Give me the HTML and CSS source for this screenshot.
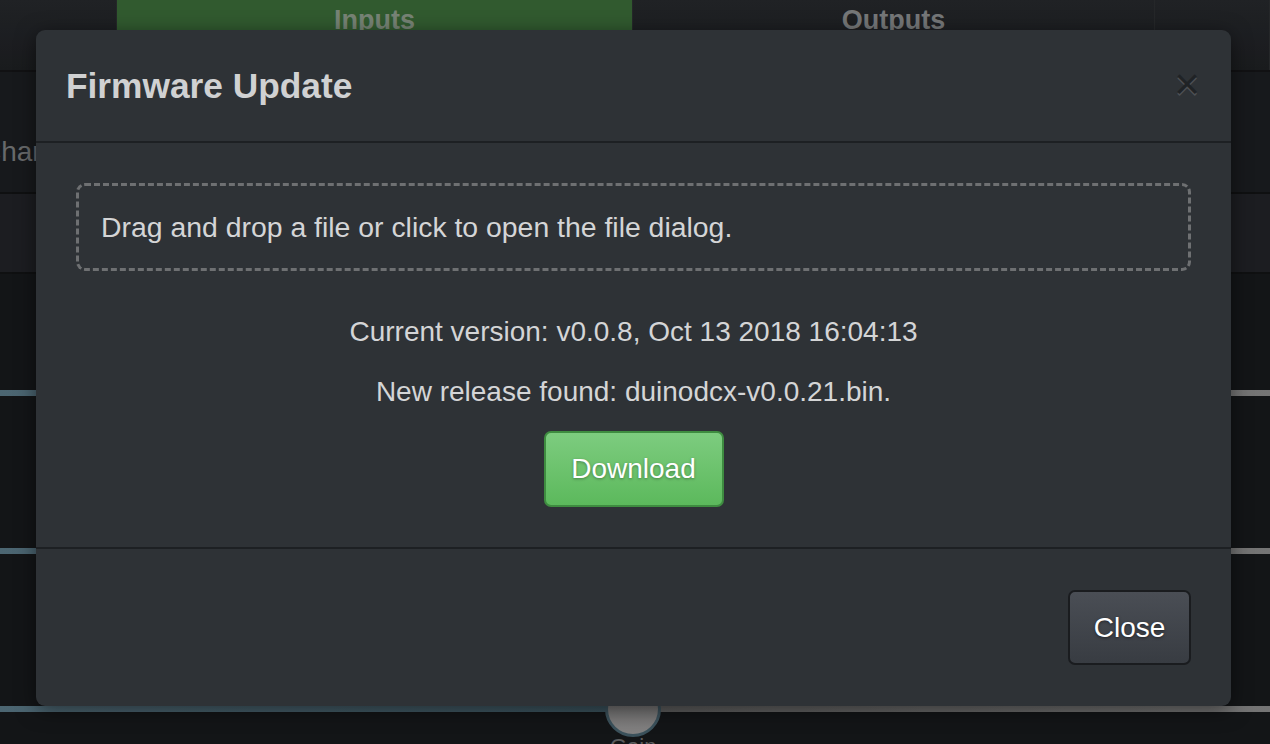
FILE: index.html
```html
<!DOCTYPE html>
<html>
<head>
<meta charset="utf-8">
<title>Firmware Update</title>
<link rel="stylesheet" href="styles.css">
</head>
<body>
<div class="page">
  <div class="tabs">
    <div class="tab-cell"></div>
    <div class="tab tab-active">Inputs</div>
    <div class="tab">Outputs</div>
    <div class="tab-cell"></div>
  </div>
  <div class="row row-name"><span class="row-label">Channel</span></div>
  <div class="row row-band"></div>
  <div class="row row-fader f1"><div class="track"></div></div>
  <div class="row row-fader f2"><div class="track"></div></div>
  <div class="row row-fader f3"><div class="track"></div><div class="knob"></div><span class="gain">Gain</span></div>
</div>

<div class="backdrop"></div>

<div class="modal">
  <div class="modal-header">
    <h4 class="modal-title">Firmware Update</h4>
    <button class="close" type="button">&times;</button>
  </div>
  <div class="modal-body">
    <div class="dropzone">Drag and drop a file or click to open the file dialog.</div>
    <p class="info first">Current version: v0.0.8, Oct 13 2018 16:04:13</p>
    <p class="info">New release found: duinodcx-v0.0.21.bin.</p>
    <div class="center"><button class="btn btn-success" type="button">Download</button></div>
  </div>
  <div class="modal-footer">
    <button class="btn btn-default" type="button">Close</button>
  </div>
</div>
</body>
</html>
```

FILE: styles.css
```css
html, body {
  margin: 0;
  padding: 0;
  width: 1270px;
  height: 744px;
  overflow: hidden;
  background: #17191c;
  font-family: "Liberation Sans", Arial, Helvetica, sans-serif;
}

.page {
  display: flex;
  flex-direction: column;
  width: 1270px;
  height: 744px;
}

.tabs {
  display: grid;
  grid-template-columns: 117px 516px 522px 1fr;
  height: 70px;
  flex: none;
  border-bottom: 2px solid #141517;
  background: linear-gradient(#26282c, #1e2023);
}

.tab-cell {
  border-right: 1px solid #2c2e31;
}

.tab {
  color: #8a8c8e;
  font-size: 27px;
  font-weight: bold;
  text-align: center;
  line-height: 40px;
  border-right: 1px solid #2c2e31;
}

.tab-active {
  background: #3a6a38;
  color: #8c9a8a;
}

.row {
  position: relative;
  flex: none;
}

.row-name {
  height: 120px;
  background: #1c1e21;
  border-bottom: 2px solid #121315;
}

.row-label {
  position: absolute;
  left: -19px;
  top: 64px;
  color: #7a7c7e;
  font-size: 28px;
}

.row-band {
  height: 78px;
  background: #212327;
  border-bottom: 2px solid #121315;
}

.row-fader {
  background: #17191c;
}

.f1 { height: 122px; }
.f2 { height: 158px; }
.f3 { flex: 1; }

.track {
  position: absolute;
  left: 0;
  right: 0;
  bottom: 0;
  height: 6px;
  background: linear-gradient(90deg, #5a7886 0%, #44606c 48%, #6c6c6c 52%, #8a8a8a 100%);
}

.f3 .track {
  bottom: auto;
  top: 152px;
}

.knob {
  position: absolute;
  left: 605px;
  top: 127px;
  width: 50px;
  height: 50px;
  border-radius: 50%;
  border: 3px solid #46606c;
  background: linear-gradient(#7a7a7a, #9a9898);
}

.gain {
  position: absolute;
  left: 610px;
  top: 180px;
  color: #6a6c6e;
  font-size: 22px;
}

.backdrop {
  position: absolute;
  inset: 0;
  background: rgba(0, 0, 0, 0.15);
}

.modal {
  position: absolute;
  left: 36px;
  top: 30px;
  width: 1195px;
  height: 676px;
  background: #2e3236;
  border-radius: 9px;
  box-shadow: 0 4px 20px rgba(0, 0, 0, 0.5);
  display: flex;
  flex-direction: column;
  color: #d4d5d6;
}

.modal-header {
  height: 113px;
  flex: none;
  box-sizing: border-box;
  padding: 0 30px;
  display: flex;
  align-items: center;
  justify-content: space-between;
  border-bottom: 2px solid #1d2023;
}

.modal-title {
  margin: 0;
  font-size: 35.3px;
  font-weight: bold;
  color: #d0d1d2;
}

.close {
  background: none;
  border: 0;
  padding: 0;
  margin-right: 1px;
  margin-top: -4px;
  font-family: "Liberation Sans", Arial, sans-serif;
  font-size: 44px;
  font-weight: normal;
  line-height: 1;
  color: #202326;
  text-shadow: 0 2px 0 #4d5054;
}

.modal-body {
  height: 406px;
  flex: none;
  box-sizing: border-box;
  padding: 40px 40px 0;
  border-bottom: 2px solid #1d2023;
}

.dropzone {
  height: 88px;
  box-sizing: border-box;
  border: 3px dashed #6e7072;
  border-radius: 9px;
  padding: 0 22px;
  display: flex;
  align-items: center;
  font-size: 28.4px;
  color: #d4d5d6;
}

.info {
  margin: 0;
  text-align: center;
  font-size: 28px;
  line-height: 32px;
}

.info.first {
  margin-top: 45px;
  margin-bottom: 28px;
}

.center {
  display: flex;
  justify-content: center;
  margin-top: 23px;
}

.btn {
  font-family: "Liberation Sans", Arial, sans-serif;
  font-size: 28px;
  border-radius: 7px;
  height: 76px;
  box-sizing: border-box;
  cursor: pointer;
  padding: 0;
}

.btn-success {
  width: 180px;
  color: #ffffff;
  background: linear-gradient(#7dcc7f, #5cb95c);
  border: 2px solid #3e8c40;
  text-shadow: 0 1px 3px rgba(0, 0, 0, 0.35);
}

.modal-footer {
  flex: 1;
  display: flex;
  justify-content: flex-end;
  align-items: flex-start;
  padding: 41px 40px 0;
}

.btn-default {
  width: 123px;
  height: 75px;
  color: #ffffff;
  background: linear-gradient(#4a4e55, #383c42);
  border: 2px solid #1a1c1f;
  text-shadow: 0 1px 3px rgba(0, 0, 0, 0.5);
}
```
